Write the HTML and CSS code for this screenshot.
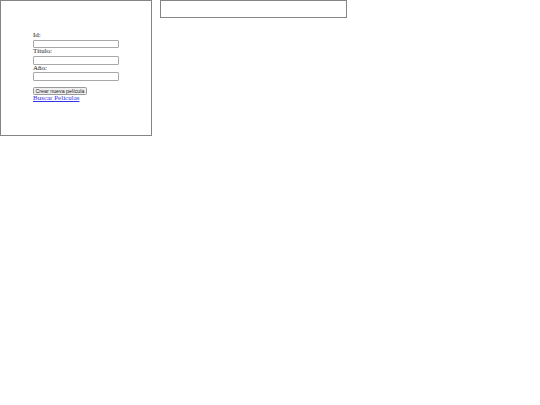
FILE: index.html
```html
<!DOCTYPE html>
<html lang="es">
<head>
<meta charset="utf-8">
<title>Películas</title>
<link rel="stylesheet" href="styles.css">
</head>
<body>
<div class="page">
  <div class="panel">
    <form class="form">
      <label class="label" for="id">Id:</label>
      <input class="field" id="id" type="text">
      <label class="label" for="titulo">Título:</label>
      <input class="field" id="titulo" type="text">
      <label class="label" for="anio">Año:</label>
      <input class="field" id="anio" type="text">
      <button class="btn" type="button">Crear nueva película</button>
    </form>
    <a class="link" href="#">Buscar Películas</a>
  </div>
  <div class="results"></div>
</div>
</body>
</html>
```
FILE: styles.css
```css
html, body {
  margin: 0;
  padding: 0;
  background: #fff;
}
.page {
  display: flex;
  align-items: flex-start;
  gap: 8px;
  font-family: "Liberation Serif", "Times New Roman", serif;
  font-size: 7px;
  color: #222;
}
.panel {
  box-sizing: border-box;
  width: 152px;
  height: 136px;
  border: 1px solid #858585;
  padding: 31px 0 0 32px;
  display: flex;
  flex-direction: column;
  align-items: flex-start;
}
.form {
  display: flex;
  flex-direction: column;
  align-items: flex-start;
  margin: 0;
}
.label {
  display: block;
  line-height: 7.8px;
  height: 7.8px;
}
.field {
  box-sizing: border-box;
  width: 86px;
  height: 8.5px;
  margin: 0;
  padding: 0;
  border: 1px solid #a8a8a8;
  border-radius: 1px;
  background: #fff;
  font-size: 5.6px;
}
.btn {
  box-sizing: border-box;
  margin: 6px 0 0 0;
  height: 8.5px;
  padding: 0 1.5px;
  font-family: "Liberation Sans", Arial, sans-serif;
  font-size: 5.3px;
  line-height: 6px;
  color: #222;
  background: #efefef;
  border: 1px solid #9a9a9a;
  border-radius: 1.5px;
}
.link {
  color: #3333ee;
  text-decoration: underline;
  line-height: 7.8px;
}
.results {
  box-sizing: border-box;
  width: 187px;
  height: 18px;
  border: 1px solid #858585;
}
```
